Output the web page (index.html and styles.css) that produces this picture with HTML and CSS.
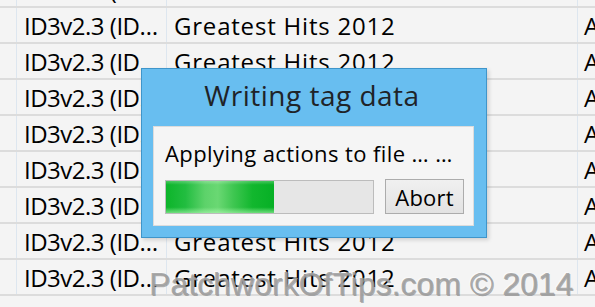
FILE: index.html
```html
<!DOCTYPE html>
<html>
<head>
    <meta charset="UTF-8">
    <title>Writing tag data</title>
    <link rel="stylesheet" href="styles.css">
</head>
<body>
    <div class="list">
        <div class="row"><div class="cell mark"></div><div class="cell tag">ID3v2.3 (ID…</div><div class="cell album">Greatest Hits 2012</div><div class="cell artist">A</div></div>
        <div class="row"><div class="cell mark"></div><div class="cell tag">ID3v2.3 (ID…</div><div class="cell album">Greatest Hits 2012</div><div class="cell artist">A</div></div>
        <div class="row"><div class="cell mark"></div><div class="cell tag">ID3v2.3 (ID…</div><div class="cell album">Greatest Hits 2012</div><div class="cell artist">A</div></div>
        <div class="row"><div class="cell mark"></div><div class="cell tag">ID3v2.3 (ID…</div><div class="cell album">Greatest Hits 2012</div><div class="cell artist">A</div></div>
        <div class="row"><div class="cell mark"></div><div class="cell tag">ID3v2.3 (ID…</div><div class="cell album">Greatest Hits 2012</div><div class="cell artist">A</div></div>
        <div class="row"><div class="cell mark"></div><div class="cell tag">ID3v2.3 (ID…</div><div class="cell album">Greatest Hits 2012</div><div class="cell artist">A</div></div>
        <div class="row"><div class="cell mark"></div><div class="cell tag">ID3v2.3 (ID…</div><div class="cell album">Greatest Hits 2012</div><div class="cell artist">A</div></div>
        <div class="row"><div class="cell mark"></div><div class="cell tag">ID3v2.3 (ID…</div><div class="cell album">Greatest Hits 2012</div><div class="cell artist">A</div></div>
        <div class="row"><div class="cell mark"></div><div class="cell tag">ID3v2.3 (ID…</div><div class="cell album">Greatest Hits 2012</div><div class="cell artist">A</div></div>
    </div>

    <div class="dialog">
        <div class="dialog-title">Writing tag data</div>
        <div class="dialog-body">
            <div class="status">Applying actions to file … …</div>
            <div class="controls">
                <div class="progress"><div class="progress-fill" style="width: 52%"></div></div>
                <button class="abort-btn">Abort</button>
            </div>
        </div>
    </div>

    <div class="watermark">PatchworkOfTips.com © 2014</div>
</body>
</html>
```

FILE: styles.css
```css
html, body {
    height: 307px;
    overflow: hidden;
}

body {
    margin: 0;
    width: 595px;
    background: #f4f4f4;
    font-family: 'Open Sans', 'Noto Sans', sans-serif;
    color: #000;
    position: relative;
}

.list {
    margin-top: -28px;
}

.row {
    display: flex;
    height: 36px;
    box-sizing: border-box;
    border-bottom: 2px solid #dcdcdc;
}

.cell {
    height: 34px;
    line-height: 34px;
    font-size: 24px;
    letter-spacing: 0.8px;
    white-space: nowrap;
    overflow: hidden;
    box-sizing: border-box;
    border-right: 1px solid #dde6ef;
    padding-top: 1px;
}

.mark {
    width: 17px;
}

.tag {
    width: 150px;
    padding-left: 7px;
    letter-spacing: -0.5px;
}

.album {
    width: 411px;
    padding-left: 7px;
}

.artist {
    flex: 1;
    padding-left: 6px;
    border-right: none;
}

/* progress dialog */
.dialog {
    position: absolute;
    left: 141px;
    top: 68px;
    width: 346px;
    height: 170px;
    box-sizing: border-box;
    background: #68bef0;
    border: 1px solid #3f95ca;
    box-shadow: 2px 2px 4px rgba(0, 0, 0, 0.15);
}

.dialog-title {
    text-align: center;
    font-size: 28px;
    color: #1f2328;
    height: 57px;
    line-height: 36px;
    padding: 8px 4px 0 0;
    box-sizing: border-box;
    letter-spacing: 0.5px;
}

.dialog-body {
    margin: 0 12px 0 11px;
    height: 100px;
    box-sizing: border-box;
    background: #f5f5f5;
    border: 1px solid #dcdcdc;
    padding: 11px 0 0 11px;
}

.status {
    font-size: 22px;
    line-height: 30px;
    letter-spacing: 0.4px;
    white-space: nowrap;
}

.controls {
    display: flex;
    gap: 11px;
    margin-top: 12px;
}

.progress {
    width: 209px;
    height: 34px;
    box-sizing: border-box;
    border: 1px solid #bcbcbc;
    background: #e6e6e6;
}

.progress-fill {
    height: 100%;
    background:
        linear-gradient(180deg, rgba(255, 255, 255, 0.25) 0%, rgba(255, 255, 255, 0) 12%, rgba(255, 255, 255, 0) 82%, rgba(190, 255, 190, 0.55) 100%),
        linear-gradient(90deg, #0cb52a 0%, #22bd40 18%, #5dd26a 36%, #6ad873 48%, #40c752 62%, #12b72e 80%, #06b025 100%);
}

.abort-btn {
    width: 79px;
    height: 35px;
    margin-top: -1px;
    box-sizing: border-box;
    border: 1px solid #acacac;
    border-radius: 0;
    background: linear-gradient(180deg, #f0f0f0 0%, #e8e8e8 60%, #e2e2e2 100%);
    font-family: 'Open Sans', 'Noto Sans', sans-serif;
    font-size: 22px;
    letter-spacing: 0.2px;
    color: #000;
    padding: 0;
}

.watermark {
    position: absolute;
    left: 149px;
    top: 266px;
    font-family: 'Liberation Sans', Arial, sans-serif;
    font-size: 32px;
    color: rgba(160, 160, 160, 0.9);
    text-shadow: 1px 1px 0 rgba(90, 90, 90, 0.45), -1px -1px 0 rgba(255, 255, 255, 0.5);
    white-space: nowrap;
}
```
